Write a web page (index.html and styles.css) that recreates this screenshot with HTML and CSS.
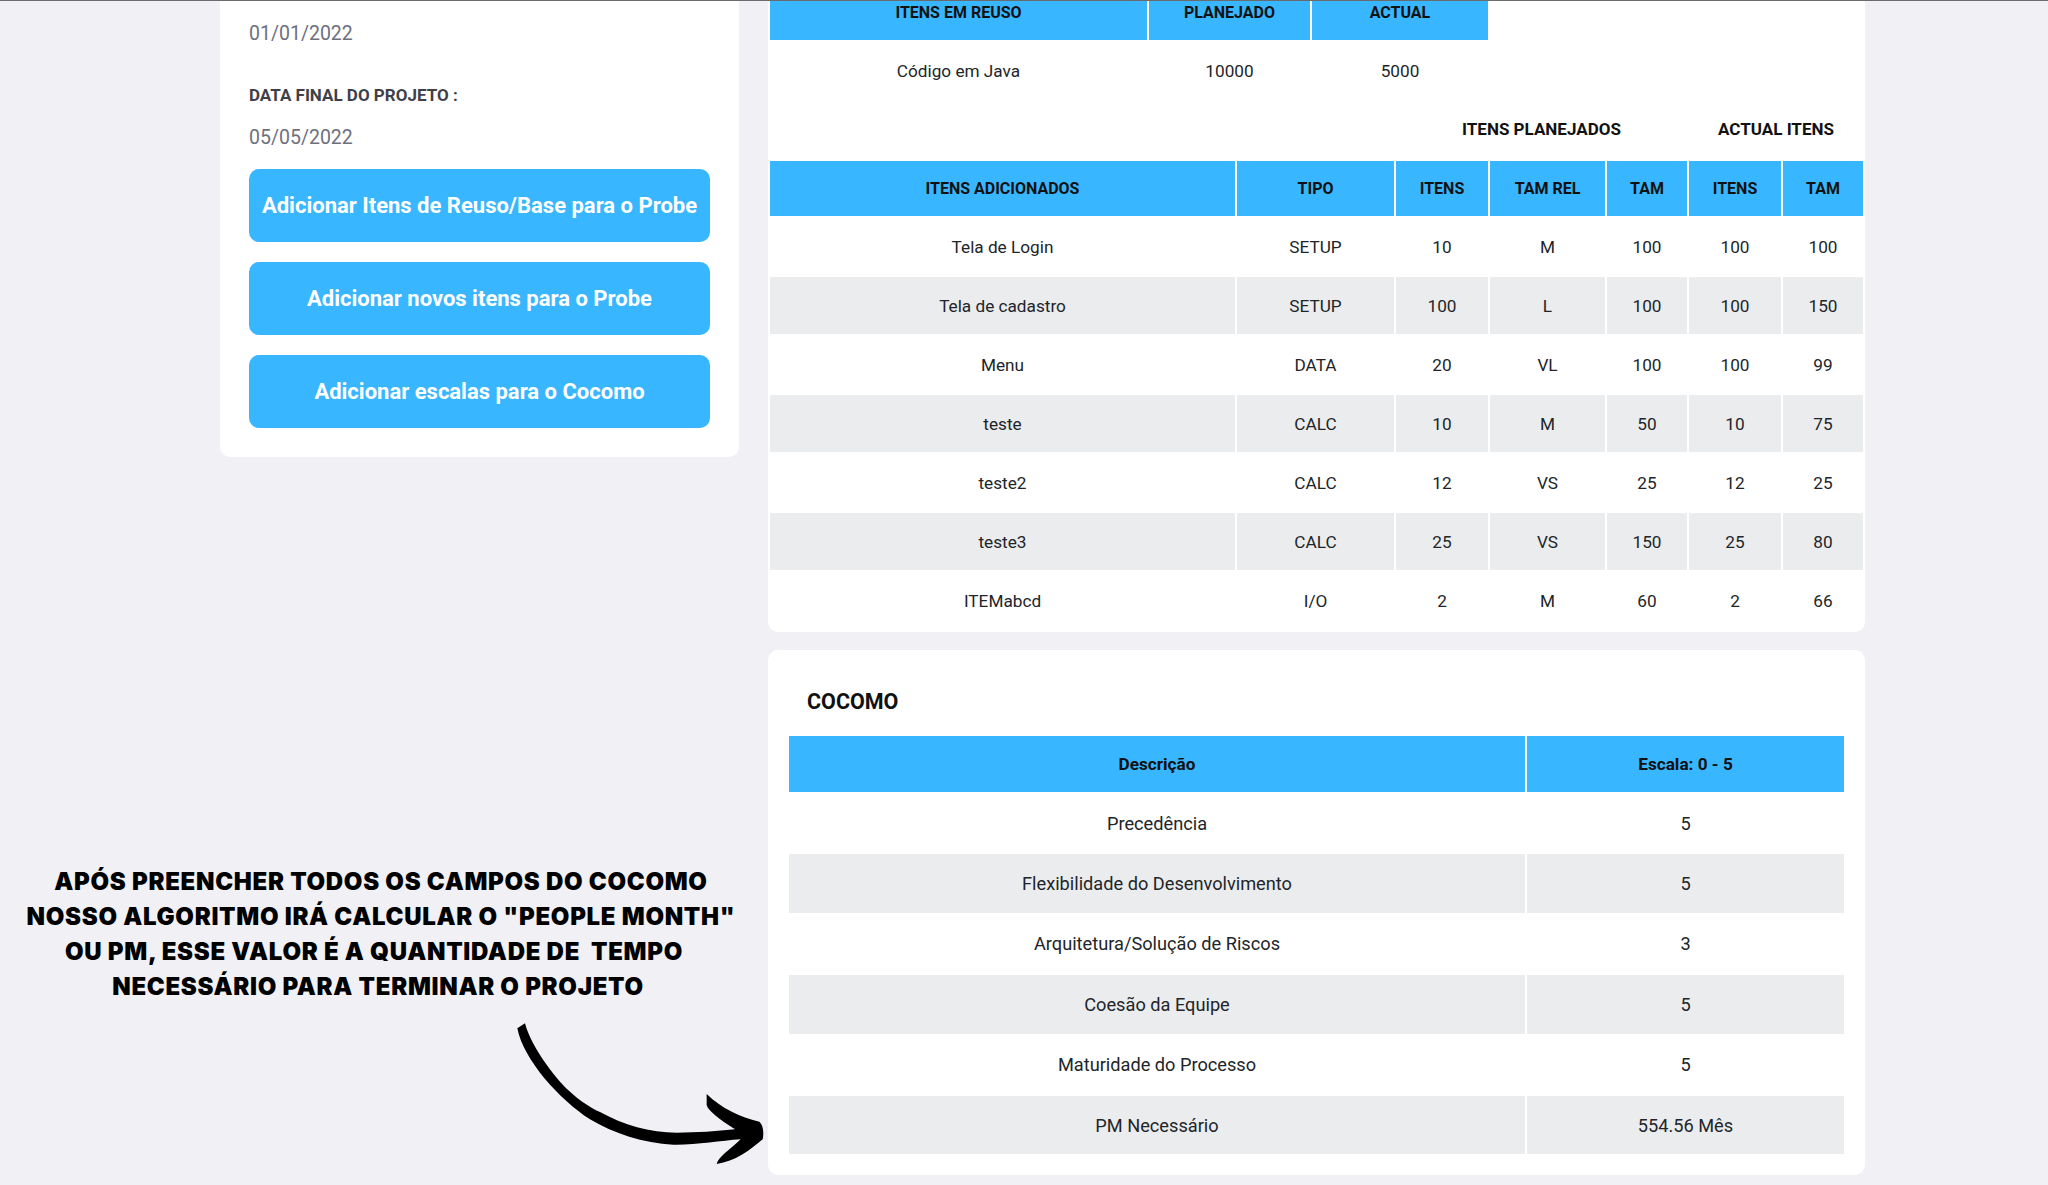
FILE: index.html
```html
<!DOCTYPE html>
<html lang="pt-BR">
<head>
    <meta charset="UTF-8">
    <title>Probe e Cocomo</title>
    <link rel="stylesheet" href="styles.css">
</head>
<body>

<div class="topline"></div>

<div class="page">
    <aside class="card side">
        <p class="date first">01/01/2022</p>
        <p class="label">DATA FINAL DO PROJETO :</p>
        <p class="date">05/05/2022</p>
        <div class="buttons">
            <button type="button">Adicionar Itens de Reuso/Base para o Probe</button>
            <button type="button">Adicionar novos itens para o Probe</button>
            <button type="button">Adicionar escalas para o Cocomo</button>
        </div>
    </aside>

    <main class="content">
        <section class="card probe">
            <table class="reuse">
                <colgroup>
                    <col class="r1"><col class="r2"><col class="r3">
                </colgroup>
                <thead>
                    <tr>
                        <th>ITENS EM REUSO</th>
                        <th>PLANEJADO</th>
                        <th>ACTUAL</th>
                    </tr>
                </thead>
                <tbody>
                    <tr><td>Código em Java</td><td>10000</td><td>5000</td></tr>
                </tbody>
            </table>

            <table class="added">
                <colgroup>
                    <col class="a1"><col class="a2"><col class="a3"><col class="a4"><col class="a5"><col class="a6"><col class="a7">
                </colgroup>
                <thead>
                    <tr class="group">
                        <th colspan="2"></th>
                        <th colspan="3">ITENS PLANEJADOS</th>
                        <th colspan="2">ACTUAL ITENS</th>
                    </tr>
                    <tr class="head">
                        <th>ITENS ADICIONADOS</th>
                        <th>TIPO</th>
                        <th>ITENS</th>
                        <th>TAM REL</th>
                        <th>TAM</th>
                        <th>ITENS</th>
                        <th>TAM</th>
                    </tr>
                </thead>
                <tbody>
                    <tr><td>Tela de Login</td><td>SETUP</td><td>10</td><td>M</td><td>100</td><td>100</td><td>100</td></tr>
                    <tr><td>Tela de cadastro</td><td>SETUP</td><td>100</td><td>L</td><td>100</td><td>100</td><td>150</td></tr>
                    <tr><td>Menu</td><td>DATA</td><td>20</td><td>VL</td><td>100</td><td>100</td><td>99</td></tr>
                    <tr><td>teste</td><td>CALC</td><td>10</td><td>M</td><td>50</td><td>10</td><td>75</td></tr>
                    <tr><td>teste2</td><td>CALC</td><td>12</td><td>VS</td><td>25</td><td>12</td><td>25</td></tr>
                    <tr><td>teste3</td><td>CALC</td><td>25</td><td>VS</td><td>150</td><td>25</td><td>80</td></tr>
                    <tr><td>ITEMabcd</td><td>I/O</td><td>2</td><td>M</td><td>60</td><td>2</td><td>66</td></tr>
                </tbody>
            </table>
        </section>

        <section class="card cocomo">
            <h2>COCOMO</h2>
            <table class="scales">
                <colgroup>
                    <col class="s1"><col class="s2">
                </colgroup>
                <thead>
                    <tr>
                        <th>Descrição</th>
                        <th>Escala: 0 - 5</th>
                    </tr>
                </thead>
                <tbody>
                    <tr><td>Precedência</td><td>5</td></tr>
                    <tr><td>Flexibilidade do Desenvolvimento</td><td>5</td></tr>
                    <tr><td>Arquitetura/Solução de Riscos</td><td>3</td></tr>
                    <tr><td>Coesão da Equipe</td><td>5</td></tr>
                    <tr><td>Maturidade do Processo</td><td>5</td></tr>
                    <tr><td>PM Necessário</td><td>554.56 Mês</td></tr>
                </tbody>
            </table>
        </section>
    </main>
</div>

<!-- anotação por cima da tela -->
<div class="note">
    <div>APÓS PREENCHER TODOS OS CAMPOS DO COCOMO</div>
    <div>NOSSO ALGORITMO IRÁ CALCULAR O "PEOPLE MONTH"</div>
    <div class="shift">OU PM, ESSE VALOR É A QUANTIDADE DE  TEMPO</div>
    <div class="shift-small">NECESSÁRIO PARA TERMINAR O PROJETO</div>
</div>

<svg class="arrow" viewBox="0 0 840 510" width="280" height="170">
    <path d="M52 55 L75 40 C85 80 120 145 180 215 C225 265 270 292 300 306 C370 345 450 368 530 368 C590 368 650 364 705 358 C670 335 625 305 620 285 L620 252 C665 295 720 322 778 335 C790 345 792 370 788 388 C750 420 705 455 650 462 C655 440 690 420 722 388 C660 392 590 405 520 404 C430 400 340 370 270 328 C180 270 70 150 52 55 Z"/>
</svg>

</body>
</html>
```

FILE: styles.css
```css
html, body {
    height: 1185px;
    overflow: hidden;
}
body {
    font-family: 'Roboto', sans-serif;
    background: #f0f0f5;
    color: #212529;
    margin: 0;
    position: relative;
}
.topline {
    position: absolute;
    top: 0;
    left: 0;
    right: 0;
    height: 1px;
    background: #6b6b6b;
    z-index: 2;
}
.page {
    display: flex;
    align-items: flex-start;
    gap: 29px;
    padding-left: 220px;
    margin-top: -17px;
}
.card {
    background: #fff;
    border-radius: 10px;
}

/* coluna da esquerda */
.side {
    width: 519px;
    box-sizing: border-box;
    padding: 39px 29px 29px;
}
.date {
    margin: 0 0 19px;
    font-size: 19.5px;
    line-height: 24px;
    color: #6e707e;
}
.date.first {
    margin-bottom: 37px;
}
.label {
    margin: 0 0 19px;
    font-size: 17px;
    line-height: 24px;
    font-weight: 700;
    color: #3f3f4a;
}
.buttons {
    display: flex;
    flex-direction: column;
    gap: 20px;
}
.buttons button {
    height: 73px;
    border: none;
    border-radius: 10px;
    background: #38b6ff;
    color: #fff;
    font-family: inherit;
    font-size: 22px;
    font-weight: 700;
    padding: 0;
}

/* tabelas */
.content {
    width: 1097px;
    display: flex;
    flex-direction: column;
    gap: 18px;
}
table {
    border-collapse: separate;
    border-spacing: 2px;
    table-layout: fixed;
    font-size: 17.2px;
}
th {
    background: #38b6ff;
    color: #111;
    font-size: 16px;
    font-weight: 700;
    text-align: center;
    padding: 0;
}
td {
    text-align: center;
    padding: 0;
    height: 57px;
}
.probe {
    padding-bottom: 0;
    height: 649px;
}
.reuse {
    width: 721px;
}
.reuse th {
    height: 55px;
}
.r1 { width: 377px; }
.r2 { width: 161px; }
.r3 { width: 176px; }

.added {
    width: 1097px;
    margin-top: 14px;
}
.added tbody tr:nth-child(even) td,
.scales tbody tr:nth-child(even) td {
    background: #ebecee;
}
.group th {
    background: none;
    height: 24px;
    padding-bottom: 18px;
    font-size: 17px;
    color: #111;
}
.head th {
    height: 55px;
}
.a1 { width: 465px; }
.a2 { width: 157px; }
.a3 { width: 92px; }
.a4 { width: 115px; }
.a5 { width: 80px; }
.a6 { width: 92px; }
.a7 { width: 80px; }

.cocomo {
    height: 525px;
    box-sizing: border-box;
    padding: 34px 19px 0;
}
.cocomo h2 {
    margin: 0 0 14px 20px;
    font-size: 21.5px;
    line-height: 36px;
    font-weight: 700;
    color: #111;
}
.scales {
    width: 1059px;
    font-size: 18.2px;
}
.scales th {
    height: 56px;
    font-size: 17.2px;
}
.scales td {
    height: 58.4px;
}
.s1 { width: 736px; }
.s2 { width: 317px; }

/* anotação */
.note {
    position: absolute;
    left: 0;
    top: 864px;
    width: 762px;
    text-align: center;
    font-family: 'Inter', sans-serif;
    font-weight: 900;
    font-size: 24px;
    letter-spacing: 0.7px;
    line-height: 35px;
    color: #000;
}
.note div {
    white-space: pre;
}
.note .shift {
    padding-right: 14px;
}
.note .shift-small {
    padding-right: 6px;
}
.arrow {
    position: absolute;
    left: 500px;
    top: 1010px;
}
```
